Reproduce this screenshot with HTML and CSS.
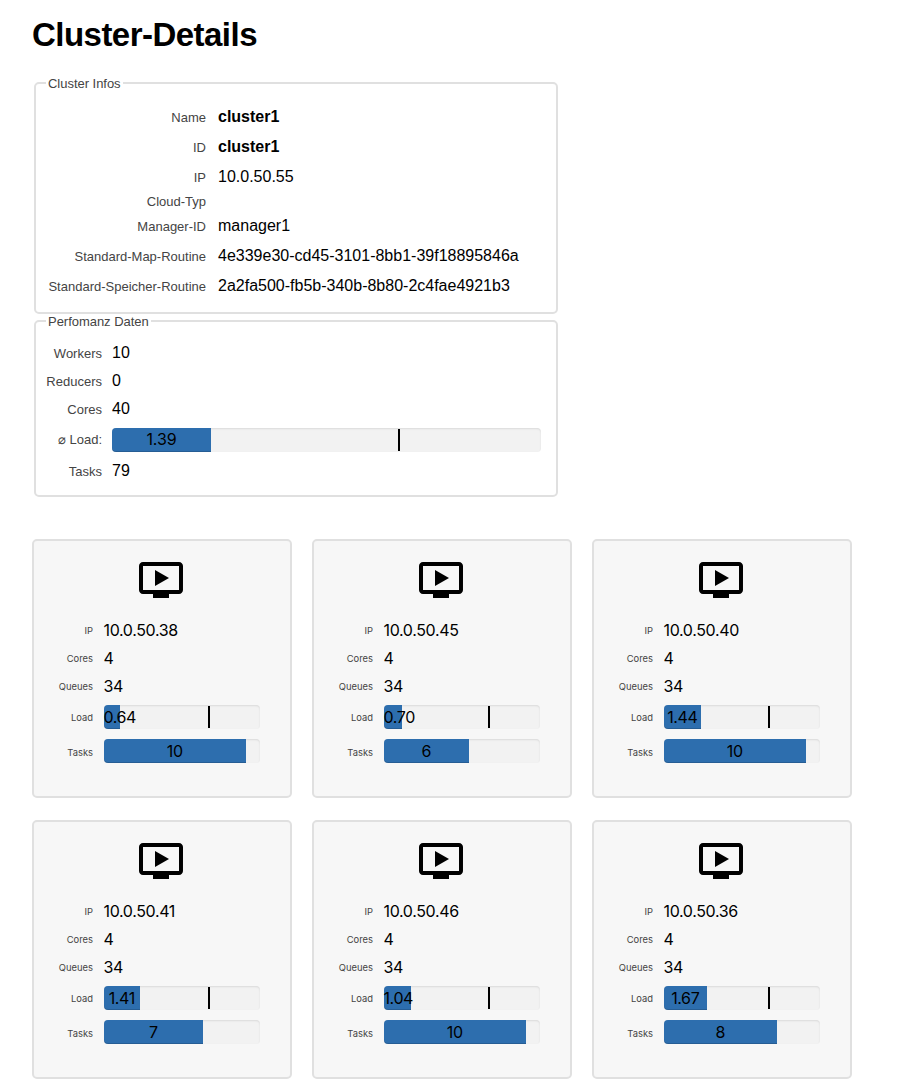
FILE: index.html
```
<!DOCTYPE html>
<html lang="de">
<head>
<meta charset="utf-8">
<title>Cluster-Details</title>
<link rel="stylesheet" href="styles.css">
</head>
<body>
<svg class="sprite" aria-hidden="true">
  <symbol id="screen" viewBox="0 0 24 24"><path d="M21 3H3c-1.11 0-2 .89-2 2v12c0 1.1.89 2 2 2h5v2h8v-2h5c1.1 0 1.99-.9 1.99-2L23 5c0-1.11-.9-2-2-2zm0 14H3V5h18v12zm-5-6l-7 4V7z"/></symbol>
</svg>
<h1 class="title">Cluster-Details</h1>
<fieldset class="panel info">
  <legend><span>Cluster Infos</span></legend>
  <dl class="rows">
    <dt>Name</dt><dd><b>cluster1</b></dd>
    <dt>ID</dt><dd><b>cluster1</b></dd>
    <dt>IP</dt><dd>10.0.50.55</dd>
    <dt class="empty">Cloud-Typ</dt><dd></dd>
    <dt>Manager-ID</dt><dd>manager1</dd>
    <dt>Standard-Map-Routine</dt><dd>4e339e30-cd45-3101-8bb1-39f18895846a</dd>
    <dt>Standard-Speicher-Routine</dt><dd>2a2fa500-fb5b-340b-8b80-2c4fae4921b3</dd>
  </dl>
</fieldset>
<fieldset class="panel perf">
  <legend><span>Perfomanz Daten</span></legend>
  <dl class="rows">
    <dt>Workers</dt><dd>10</dd>
    <dt>Reducers</dt><dd>0</dd>
    <dt>Cores</dt><dd>40</dd>
    <dt class="load">⌀ Load:</dt><dd><div class="bar limit"><div class="fill" style="width:99px">1.39</div></div></dd>
    <dt>Tasks</dt><dd>79</dd>
  </dl>
</fieldset>
<main class="workers">
  <section class="card">
    <svg class="icon"><use href="#screen"/></svg>
    <dl class="rows">
      <dt>IP</dt><dd>10.0.50.38</dd>
      <dt>Cores</dt><dd>4</dd>
      <dt>Queues</dt><dd>34</dd>
      <dt>Load</dt><dd><div class="bar limit"><div class="fill" style="width:16px">0.64</div></div></dd>
      <dt class="tasks">Tasks</dt><dd><div class="bar"><div class="fill" style="width:142px">10</div></div></dd>
    </dl>
  </section>
  <section class="card">
    <svg class="icon"><use href="#screen"/></svg>
    <dl class="rows">
      <dt>IP</dt><dd>10.0.50.45</dd>
      <dt>Cores</dt><dd>4</dd>
      <dt>Queues</dt><dd>34</dd>
      <dt>Load</dt><dd><div class="bar limit"><div class="fill" style="width:18px">0.70</div></div></dd>
      <dt class="tasks">Tasks</dt><dd><div class="bar"><div class="fill" style="width:85px">6</div></div></dd>
    </dl>
  </section>
  <section class="card">
    <svg class="icon"><use href="#screen"/></svg>
    <dl class="rows">
      <dt>IP</dt><dd>10.0.50.40</dd>
      <dt>Cores</dt><dd>4</dd>
      <dt>Queues</dt><dd>34</dd>
      <dt>Load</dt><dd><div class="bar limit"><div class="fill" style="width:37px">1.44</div></div></dd>
      <dt class="tasks">Tasks</dt><dd><div class="bar"><div class="fill" style="width:142px">10</div></div></dd>
    </dl>
  </section>
  <section class="card">
    <svg class="icon"><use href="#screen"/></svg>
    <dl class="rows">
      <dt>IP</dt><dd>10.0.50.41</dd>
      <dt>Cores</dt><dd>4</dd>
      <dt>Queues</dt><dd>34</dd>
      <dt>Load</dt><dd><div class="bar limit"><div class="fill" style="width:36px">1.41</div></div></dd>
      <dt class="tasks">Tasks</dt><dd><div class="bar"><div class="fill" style="width:99px">7</div></div></dd>
    </dl>
  </section>
  <section class="card">
    <svg class="icon"><use href="#screen"/></svg>
    <dl class="rows">
      <dt>IP</dt><dd>10.0.50.46</dd>
      <dt>Cores</dt><dd>4</dd>
      <dt>Queues</dt><dd>34</dd>
      <dt>Load</dt><dd><div class="bar limit"><div class="fill" style="width:27px">1.04</div></div></dd>
      <dt class="tasks">Tasks</dt><dd><div class="bar"><div class="fill" style="width:142px">10</div></div></dd>
    </dl>
  </section>
  <section class="card">
    <svg class="icon"><use href="#screen"/></svg>
    <dl class="rows">
      <dt>IP</dt><dd>10.0.50.36</dd>
      <dt>Cores</dt><dd>4</dd>
      <dt>Queues</dt><dd>34</dd>
      <dt>Load</dt><dd><div class="bar limit"><div class="fill" style="width:43px">1.67</div></div></dd>
      <dt class="tasks">Tasks</dt><dd><div class="bar"><div class="fill" style="width:113px">8</div></div></dd>
    </dl>
  </section>
</main>
</body>
</html>
```

FILE: styles.css
```
* { box-sizing: border-box; }

body {
  margin: 0;
  padding: 16px 32px 0;
  background: #fff;
  color: #000;
  font: 16px/20px "Liberation Sans", Arial, sans-serif;
}

.sprite { display: none; }

.title {
  margin: 0 0 21px;
  font-size: 33px;
  letter-spacing: -.53px;
  line-height: 38px;
}

.rows { display: grid; margin: 0; }
.rows dt, .rows dd { display: flex; align-items: center; margin: 0; white-space: nowrap; }
.rows dt { justify-content: flex-end; color: #444; }

.panel {
  width: 524px;
  margin: 0 2px;
  padding: 0;
  border: 2px solid #e0e0e0;
  border-radius: 5px;
}
.panel legend {
  height: 16px;
  margin-left: 10px;
  padding: 0 2px;
  color: #444;
  font-size: 13px;
  letter-spacing: -.03px;
  line-height: 18px;
}
.panel dt { padding-top: 2px; font-size: 13px; }
.panel .empty, .panel .load { padding-top: 0; }

.info { height: 239px; }
.info .rows {
  grid-template-columns: 170px 1fr;
  grid-template-rows: 30px 30px 30px 19px 30px 30px 30px;
  column-gap: 12px;
  padding-top: 11px;
}

.perf { height: 184px; margin-top: -1px; }
.perf .rows {
  grid-template-columns: 66px 429px;
  grid-template-rows: 28px 28px 28px 34px 28px;
  column-gap: 10px;
  padding-top: 10px;
}
.perf .fill { letter-spacing: -.1px; line-height: 23px; }

.bar {
  position: relative;
  width: 100%;
  height: 24px;
  border-radius: 4px;
  background: #f2f2f2;
  box-shadow: inset 0 1px 2px rgba(0, 0, 0, .1);
}
.fill {
  height: 24px;
  border-radius: 4px 0 0 4px;
  background: #2d6eae;
  box-shadow: inset 0 -1px 0 rgba(0, 0, 0, .15);
  font-family: Inter, sans-serif;
  letter-spacing: -.4px;
  line-height: 24px;
  text-align: center;
}
.limit::after {
  content: "";
  position: absolute;
  top: 1px;
  left: 66.667%;
  width: 2px;
  height: 22px;
  background: #000;
}

.workers {
  display: grid;
  grid-template-columns: repeat(3, 260px);
  gap: 22px 20px;
  margin-top: 42px;
}
.card {
  height: 259px;
  padding-top: 15px;
  border: 2px solid #e0e0e0;
  border-radius: 5px;
  background: #f7f7f7;
  font-family: Inter, sans-serif;
}
.icon { display: block; width: 48px; height: 48px; margin: 0 0 12px 103px; }
.card .rows {
  grid-template-columns: 59px 156px;
  grid-template-rows: 28px 28px 28px 34px 34px;
  column-gap: 11px;
}
.card dt { padding-top: 1px; font-size: 9.4px; }
.card .tasks { padding-top: 3px; }
.card dd { letter-spacing: -.35px; text-indent: -.5px; }
```
